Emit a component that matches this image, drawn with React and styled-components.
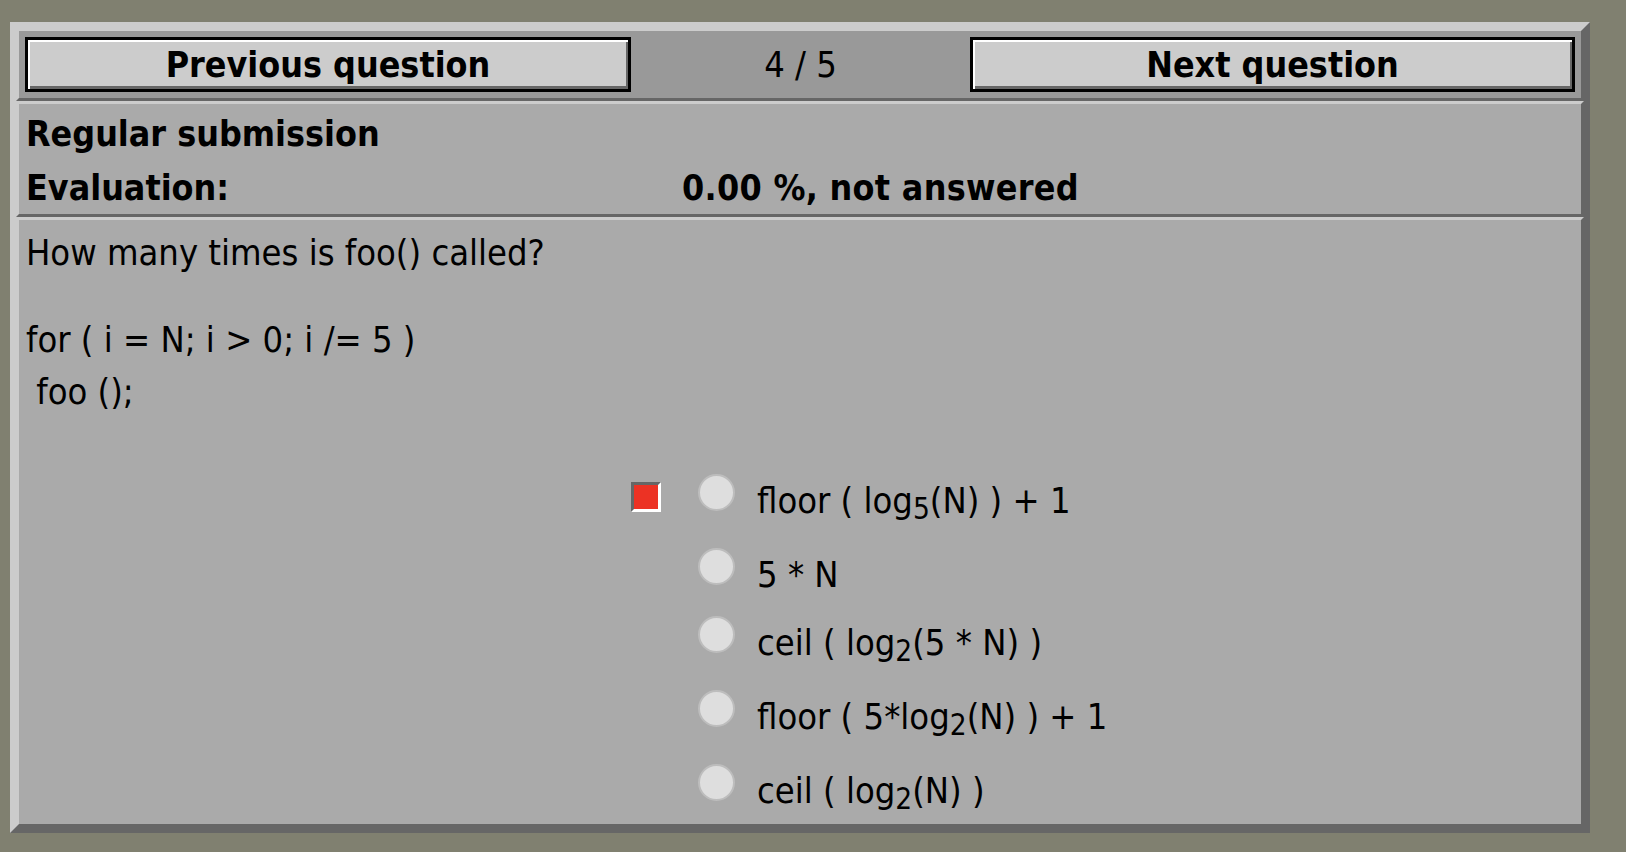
import React from "react";
import styled, { createGlobalStyle } from "styled-components";

const GlobalStyle = createGlobalStyle`
  html, body {
    margin: 0;
    padding: 0;
    background: #808070;
  }
  body {
    font-family: "DejaVu Sans Condensed", "DejaVu Sans", sans-serif;
    font-stretch: condensed;
    color: #000;
  }
`;

const Page = styled.div`
  padding: 22px 0 0 10px;
`;

const Frame = styled.div`
  width: 1580px;
  box-sizing: border-box;
  border: 6px solid;
  border-color: #ccc #666 #666 #ccc;
`;

const Section = styled.div`
  border: 3px solid;
  border-color: #ccc #666 #666 #ccc;
  background: ${(p) => (p.$head ? "#999" : "#aaa")};
`;

const NavBar = styled.div`
  display: grid;
  grid-template-columns: 606px 1fr 605px;
  align-items: center;
  padding: 6px;
`;

const NavButton = styled.button`
  height: 55px;
  box-sizing: border-box;
  border: 3px solid #000;
  box-shadow: inset 2px 2px 0 #fff, inset -2px -3px 0 #666;
  background: #ccc;
  font-family: inherit;
  font-stretch: condensed;
  font-size: 35.5px;
  font-weight: bold;
  color: #000;
  padding: 0;
  cursor: pointer;
`;

const Counter = styled.div`
  text-align: center;
  font-size: 36px;
`;

const InfoGrid = styled.div`
  display: grid;
  grid-template-columns: 656px 1fr;
  grid-auto-rows: 54px;
  align-items: center;
  padding: 2px 7px 0;
  font-size: 35.5px;
  font-weight: bold;
`;

const Score = styled.div`
  letter-spacing: 0.3px;
`;

const Question = styled.div`
  padding: 7px 7px 0;
  font-size: 36px;
  line-height: 52px;
`;

const QuestionLine = styled.div`
  margin-bottom: ${(p) => p.$gap || 0}px;
  white-space: pre;
`;

const Choices = styled.div`
  display: grid;
  grid-template-columns: 30px 37px auto;
  row-gap: 19px;
  align-items: start;
  margin: 56px 0 0 612px;
  padding-bottom: 5px;
`;

const Mark = styled.div`
  grid-column: 1;
  width: 30px;
  height: 30px;
  box-sizing: border-box;
  margin-top: 8px;
  border: 3px solid;
  border-color: #666 #fff #fff #666;
  background: ${(p) => (p.$on ? "#ec3224" : "transparent")};
  visibility: ${(p) => (p.$on ? "visible" : "hidden")};
`;

const Radio = styled.span`
  grid-column: 2;
  margin-left: 37px;
  width: 37px;
  height: 37px;
  box-sizing: border-box;
  border-radius: 50%;
  border: 2px solid #bdbdbd;
  background: #dedede;
`;

const ChoiceText = styled.div`
  grid-column: 3;
  margin-left: 59px;
  font-size: 36px;
  line-height: 44px;
  padding-top: 5px;
  padding-bottom: ${(p) => (p.$sub ? 6 : 0)}px;
  white-space: nowrap;

  sub {
    font-size: 0.82em;
    vertical-align: -6px;
    line-height: 0;
  }
`;

const choices = [
  { picked: true, text: <>floor ( log<sub>5</sub>(N) ) + 1</>, sub: true },
  { text: <>5 * N</> },
  { text: <>ceil ( log<sub>2</sub>(5 * N) )</>, sub: true },
  { text: <>floor ( 5*log<sub>2</sub>(N) ) + 1</>, sub: true },
  { text: <>ceil ( log<sub>2</sub>(N) )</>, sub: true },
];

export default function App() {
  return (
    <>
      <GlobalStyle />
      <Page>
        <Frame>
          <Section $head>
            <NavBar>
              <NavButton>Previous question</NavButton>
              <Counter>4 / 5</Counter>
              <NavButton>Next question</NavButton>
            </NavBar>
          </Section>

          <Section>
            <InfoGrid>
              <div>Regular submission</div>
              <div />
              <div>Evaluation:</div>
              <Score>0.00 %, not answered</Score>
            </InfoGrid>
          </Section>

          <Section>
            <Question>
              <QuestionLine $gap={35}>How many times is foo() called?</QuestionLine>
              <QuestionLine>for ( i = N; i &gt; 0; i /= 5 )</QuestionLine>
              <QuestionLine> foo ();</QuestionLine>
            </Question>
            <Choices>
              {choices.map((c, i) => (
                <React.Fragment key={i}>
                  <Mark $on={c.picked} />
                  <Radio />
                  <ChoiceText $sub={c.sub}>{c.text}</ChoiceText>
                </React.Fragment>
              ))}
            </Choices>
          </Section>
        </Frame>
      </Page>
    </>
  );
}
